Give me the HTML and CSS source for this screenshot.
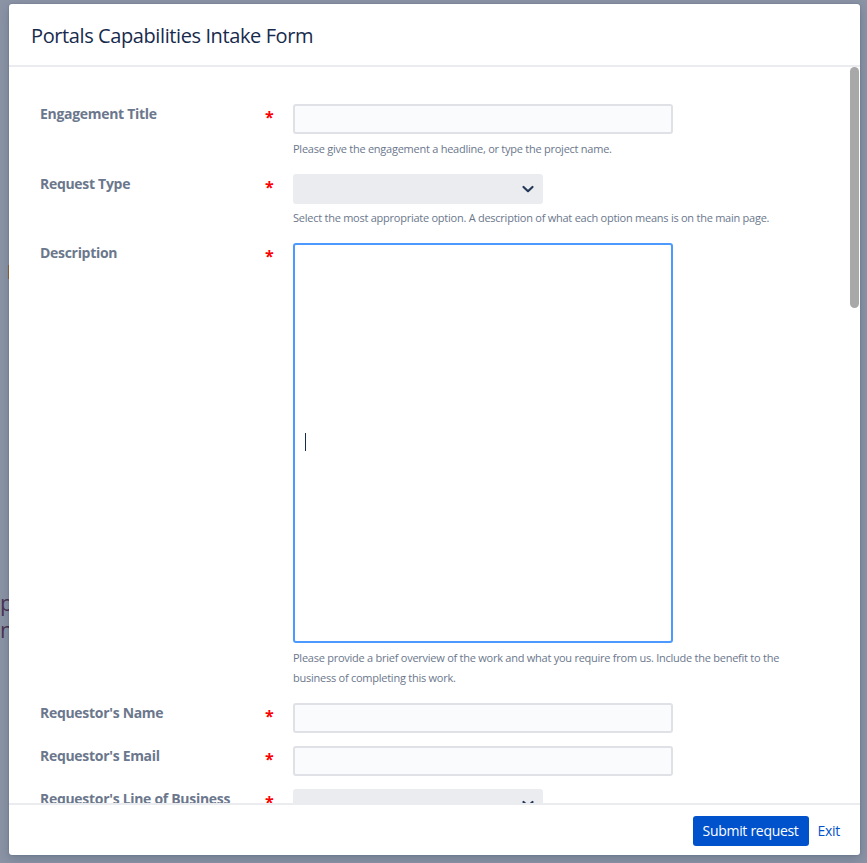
FILE: index.html
```html
<!DOCTYPE html>
<html lang="en">
<head>
<meta charset="utf-8">
<title>Portals Capabilities Intake Form</title>
<link rel="stylesheet" href="styles.css">
</head>
<body>
<div class="backdrop">
  <span class="bd-mark"></span>
  <p class="bd-text">p<br>n</p>
</div>
<div class="dialog" role="dialog">
  <header class="dialog-header">
    <h1 class="dialog-title">Portals Capabilities Intake Form</h1>
  </header>
  <div class="scroll-wrap">
    <div class="dialog-body">
      <form class="form">
        <div class="field">
          <label class="field-label">Engagement Title</label>
          <span class="req">*</span>
          <div class="control">
            <div class="input"></div>
            <div class="help">Please give the engagement a headline, or type the project name.</div>
          </div>
        </div>
        <div class="field">
          <label class="field-label">Request Type</label>
          <span class="req">*</span>
          <div class="control">
            <div class="select">
              <svg class="chev" width="14" height="10" viewBox="0 0 14 10"><path d="M2.5 3 L7 7.2 L11.5 3" fill="none" stroke="#253858" stroke-width="2.2" stroke-linecap="round" stroke-linejoin="round"/></svg>
            </div>
            <div class="help">Select the most appropriate option. A description of what each option means is on the main page.</div>
          </div>
        </div>
        <div class="field">
          <label class="field-label">Description</label>
          <span class="req">*</span>
          <div class="control">
            <div class="textarea"><span class="caret"></span></div>
            <div class="help">Please provide a brief overview of the work and what you require from us. Include the benefit to the business of completing this work.</div>
          </div>
        </div>
        <div class="field">
          <label class="field-label">Requestor's Name</label>
          <span class="req">*</span>
          <div class="control">
            <div class="input"></div>
          </div>
        </div>
        <div class="field">
          <label class="field-label">Requestor's Email</label>
          <span class="req">*</span>
          <div class="control">
            <div class="input"></div>
          </div>
        </div>
        <div class="field">
          <label class="field-label">Requestor's Line of Business</label>
          <span class="req">*</span>
          <div class="control">
            <div class="select">
              <svg class="chev" width="14" height="10" viewBox="0 0 14 10"><path d="M2.5 3 L7 7.2 L11.5 3" fill="none" stroke="#253858" stroke-width="2.2" stroke-linecap="round" stroke-linejoin="round"/></svg>
            </div>
          </div>
        </div>
      </form>
    </div>
    <div class="scroll-thumb"></div>
  </div>
  <footer class="dialog-footer">
    <button class="btn-primary" type="button">Submit request</button>
    <a class="btn-link" href="#">Exit</a>
  </footer>
</div>
</body>
</html>
```
FILE: styles.css
```css
* { box-sizing: border-box; }

html, body {
  margin: 0;
  padding: 0;
}

body {
  width: 867px;
  height: 863px;
  overflow: hidden;
  background: #8b94a5;
  font-family: "Open Sans", "Noto Sans", "Liberation Sans", sans-serif;
  position: relative;
}

.backdrop {
  position: absolute;
  left: 0;
  top: 0;
  width: 100%;
  height: 100%;
}

.bd-mark {
  position: absolute;
  left: 8px;
  top: 265px;
  width: 1px;
  height: 14px;
  background: #9a6a2a;
}

.bd-text {
  position: absolute;
  left: 0;
  top: 589px;
  margin: 0;
  font-size: 22px;
  line-height: 27px;
  color: #4a3552;
}

.dialog {
  position: absolute;
  left: 9px;
  top: 4px;
  width: 851px;
  height: 851px;
  background: #ffffff;
  border-radius: 3px;
  box-shadow: 0 0 2px rgba(9, 30, 66, 0.25), 0 4px 12px rgba(9, 30, 66, 0.2);
  display: flex;
  flex-direction: column;
  overflow: hidden;
}

.dialog-header {
  padding: 18px 22px 15px 22px;
  border-bottom: 2px solid #ebecf0;
  flex: none;
}

.dialog-title {
  margin: 0;
  font-size: 20px;
  line-height: 28px;
  font-weight: 500;
  letter-spacing: -0.4px;
  color: #172b4d;
}

.scroll-wrap {
  flex: 1;
  position: relative;
  min-height: 0;
}

.dialog-body {
  height: 100%;
  overflow-y: scroll;
  scrollbar-width: none;
}

.dialog-body::-webkit-scrollbar {
  display: none;
}

.scroll-thumb {
  position: absolute;
  top: 0;
  right: 1px;
  width: 9px;
  height: 241px;
  background: #a8a8a8;
  border-radius: 5px;
}

.form {
  padding: 37px 40px 0 31px;
  min-height: 2250px;
}

.field {
  display: grid;
  grid-template-columns: 225px 28px 1fr;
  margin-bottom: 13px;
}

.field-label {
  font-size: 14px;
  line-height: 20px;
  font-weight: 700;
  letter-spacing: -0.3px;
  color: #6b778c;
}

.req {
  color: #ff0000;
  font-size: 16px;
  line-height: 20px;
  font-weight: 700;
  padding-top: 3px;
}

.control {
  display: flex;
  flex-direction: column;
}

.input {
  width: 380px;
  height: 30px;
  background: #fafbfc;
  border: 2px solid #dfe1e6;
  border-radius: 3px;
}

.select {
  width: 250px;
  height: 30px;
  background: #ebecf0;
  border-radius: 3px;
  display: flex;
  align-items: center;
  justify-content: flex-end;
  padding-right: 8px;
}

.chev {
  display: block;
}

.textarea {
  width: 380px;
  height: 400px;
  background: #ffffff;
  border: 2px solid #4c9aff;
  border-radius: 3px;
  display: flex;
  align-items: center;
  padding-left: 10px;
}

.caret {
  display: block;
  width: 1px;
  height: 18px;
  background: #172b4d;
  margin-top: -3px;
}

.help {
  font-size: 11px;
  line-height: 20px;
  letter-spacing: -0.25px;
  color: #6b778c;
  padding: 4.5px 0 2px 0;
}

.dialog-footer {
  flex: none;
  height: 52px;
  border-top: 2px solid #ebecf0;
  display: flex;
  align-items: center;
  justify-content: flex-end;
  padding: 0 20px 0 0;
}

.btn-primary {
  font-family: inherit;
  width: 116px;
  height: 30px;
  border: none;
  border-radius: 3px;
  background: #0052cc;
  color: #ffffff;
  font-size: 14px;
  font-weight: 500;
  letter-spacing: -0.3px;
  padding: 0;
  margin-top: 1px;
}

.btn-link {
  margin-left: 9px;
  font-size: 14px;
  letter-spacing: -0.3px;
  color: #0052cc;
  text-decoration: none;
  margin-top: 1px;
}
```
